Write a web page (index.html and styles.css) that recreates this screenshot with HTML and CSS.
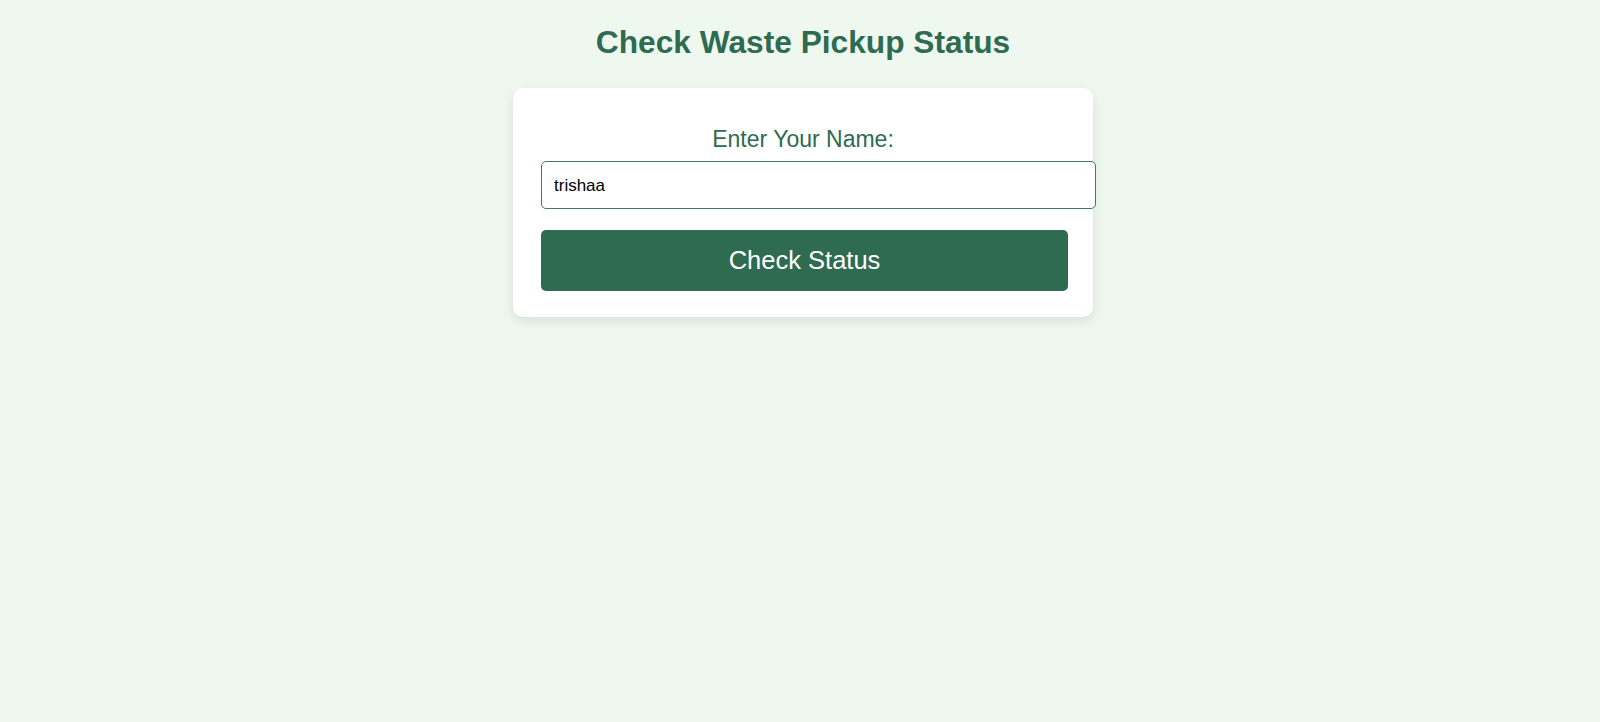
FILE: index.html
```html
<!DOCTYPE html>
<html lang="en">
<head>
<meta charset="utf-8">
<title>Check Waste Pickup Status</title>
<link rel="stylesheet" href="styles.css">
</head>
<body>
<main class="page">
  <h1 class="title">Check Waste Pickup Status</h1>
  <form class="card">
    <label class="label" for="name">Enter Your Name:</label>
    <input class="input" id="name" type="text" value="trishaa">
    <button class="btn" type="button">Check Status</button>
  </form>
</main>
</body>
</html>
```

FILE: styles.css
```css
html, body {
  height: 100%;
}
body {
  margin: 0;
  padding: 24px 0 0 6px;
  box-sizing: border-box;
  background: #eef8ef;
  font-family: "Liberation Sans", Arial, sans-serif;
}
.page {
  display: flex;
  flex-direction: column;
  align-items: center;
}
.title {
  margin: 0 0 27px;
  font-size: 31.7px;
  line-height: 37px;
  font-weight: bold;
  color: #2e6b50;
}
.card {
  width: 580px;
  box-sizing: border-box;
  padding: 39px 28px 26px;
  background: #ffffff;
  border-radius: 10px;
  box-shadow: 0 4px 12px rgba(0, 0, 0, 0.1);
  display: flex;
  flex-direction: column;
}
.label {
  display: block;
  text-align: center;
  font-size: 23px;
  line-height: 25px;
  color: #2e6b50;
  margin-bottom: 9px;
}
.input {
  width: 555px;
  height: 48px;
  box-sizing: border-box;
  padding: 1px 12px 0;
  border: 1px solid #3d7a5e;
  border-radius: 5px;
  font-family: "Liberation Sans", Arial, sans-serif;
  font-size: 17px;
  color: #000;
  margin: 0 0 21px;
  outline: none;
}
.btn {
  width: 527px;
  height: 61px;
  border: none;
  border-radius: 5px;
  background: #2e6b50;
  color: #ffffff;
  font-family: "Liberation Sans", Arial, sans-serif;
  font-size: 25.5px;
  cursor: pointer;
}
```
